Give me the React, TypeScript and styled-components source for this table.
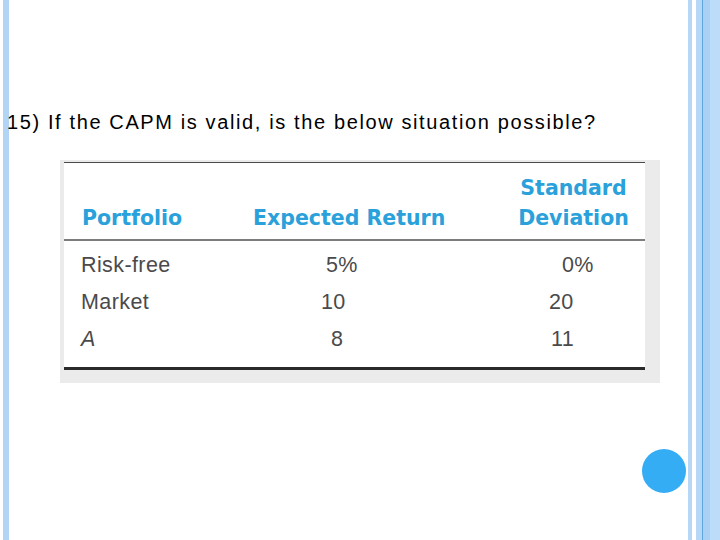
import React from "react";
import styled, { createGlobalStyle } from "styled-components";

const GlobalStyle = createGlobalStyle`
  html, body { margin: 0; padding: 0; background: #ffffff; }
  body { font-family: "Liberation Sans", Arial, sans-serif; }
`;

const Page = styled.div`
  position: relative;
  width: 720px;
  height: 540px;
  display: flex;
  background: #ffffff;
  overflow: hidden;
`;

const LeftBar = styled.div`
  width: 6px;
  margin-left: 3px;
  background: #b3d5f5;
  flex: none;
`;

const Main = styled.main`
  flex: 1;
  display: flex;
  flex-direction: column;
  padding-top: 110px;
`;

const Title = styled.h1`
  margin: 0 0 0 -2px;
  font-family: "Liberation Sans", Arial, sans-serif;
  font-weight: 400;
  font-size: 20px;
  line-height: 24px;
  letter-spacing: 1.62px;
  color: #000000;
  white-space: nowrap;
`;

const Figure = styled.div`
  margin: 26px 0 0 51px;
  width: 600px;
  box-sizing: border-box;
  padding: 2px 15px 13px 4px;
  background: #ebebeb;
`;

const Sheet = styled.div`
  background: #ffffff;
  border-top: 1.5px solid #4a4a4a;
  border-bottom: 3px solid #2a2a2a;
`;

const Grid = styled.div`
  display: grid;
  grid-template-columns: 170px 230px 1fr;
`;

const HeadRow = styled(Grid)`
  height: 78px;
  align-items: end;
  padding-bottom: 6px;
  box-sizing: border-box;
  border-bottom: 2px solid #7d7d7d;
`;

const HeadCell = styled.div<{ $pl: number; $center?: boolean }>`
  padding-left: ${(p) => p.$pl}px;
  text-align: ${(p) => (p.$center ? "center" : "left")};
  font-family: "DejaVu Sans", "Liberation Sans", sans-serif;
  font-weight: 700;
  font-size: 20.5px;
  line-height: 30px;
  color: #2aa1da;
  white-space: nowrap;
`;

const Body = styled.div`
  padding: 6px 0 9px;
`;

const BodyRow = styled(Grid)`
  height: 37px;
  align-items: center;
`;

const Cell = styled.div<{ $pl: number; $italic?: boolean }>`
  padding-left: ${(p) => p.$pl}px;
  font-family: "Liberation Sans", Arial, sans-serif;
  font-size: 21.5px;
  letter-spacing: 0.4px;
  font-style: ${(p) => (p.$italic ? "italic" : "normal")};
  color: #4a4a4a;
  white-space: nowrap;
`;

const RightFrame = styled.div`
  display: flex;
  flex: none;
`;

const Stripe = styled.div<{ $w: number; $c: string }>`
  width: ${(p) => p.$w}px;
  background: ${(p) => p.$c};
`;

const Dot = styled.div`
  position: absolute;
  left: 642px;
  top: 449px;
  width: 44px;
  height: 44px;
  border-radius: 50%;
  background: #35adf4;
`;

const rows = [
  { name: "Risk-free", italic: false, er: "5%", erPl: 92, sd: "0%", sdPl: 98 },
  { name: "Market", italic: false, er: "10", erPl: 87, sd: "20", sdPl: 85 },
  { name: "A", italic: true, er: "8", erPl: 97, sd: "11", sdPl: 87 },
];

const stripes = [
  { w: 4, c: "#b6d7f6" },
  { w: 4, c: "#ffffff" },
  { w: 6, c: "#b6d7f6" },
  { w: 1, c: "#5ea7dd" },
  { w: 7, c: "#a9d1f6" },
  { w: 10, c: "#bcdcfa" },
];

export default function App() {
  return (
    <>
      <GlobalStyle />
      <Page>
        <LeftBar />
        <Main>
          <Title>15) If the CAPM is valid, is the below situation possible?</Title>
          <Figure>
            <Sheet>
              <HeadRow>
                <HeadCell $pl={18}>Portfolio</HeadCell>
                <HeadCell $pl={19}>Expected Return</HeadCell>
                <HeadCell $pl={38} $center>
                  Standard
                  <br />
                  Deviation
                </HeadCell>
              </HeadRow>
              <Body>
                {rows.map((r) => (
                  <BodyRow key={r.name}>
                    <Cell $pl={17} $italic={r.italic}>
                      {r.name}
                    </Cell>
                    <Cell $pl={r.erPl}>{r.er}</Cell>
                    <Cell $pl={r.sdPl}>{r.sd}</Cell>
                  </BodyRow>
                ))}
              </Body>
            </Sheet>
          </Figure>
        </Main>
        <RightFrame>
          {stripes.map((s, i) => (
            <Stripe key={i} $w={s.w} $c={s.c} />
          ))}
        </RightFrame>
        <Dot />
      </Page>
    </>
  );
}
